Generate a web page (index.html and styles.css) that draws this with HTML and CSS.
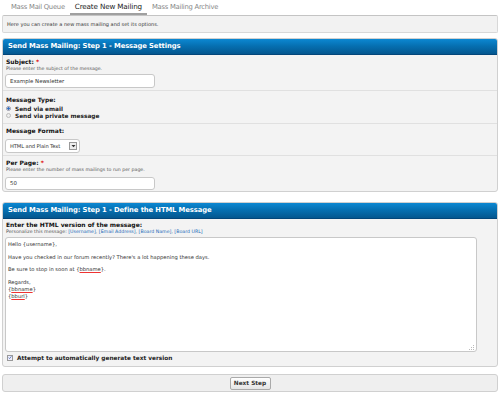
FILE: index.html
```html
<!DOCTYPE html>
<html>
<head>
<meta charset="utf-8">
<link rel="stylesheet" href="styles.css">
</head>
<body>
<div class="tabs">
  <span class="tab">Mass Mail Queue</span>
  <span class="tab active">Create New Mailing</span>
  <span class="tab">Mass Mailing Archive</span>
</div>
<div class="desc">Here you can create a new mass mailing and set its options.</div>

<div class="box">
  <div class="head">Send Mass Mailing: Step 1 - Message Settings</div>
  <div class="row r1">
    <div class="label">Subject: <span class="req">*</span></div>
    <div class="hint">Please enter the subject of the message.</div>
    <div class="input">Example Newsletter</div>
  </div>
  <div class="row r2">
    <div class="label">Message Type:</div>
    <div class="radios">
      <div class="radio"><span class="rb on"></span><b>Send via email</b></div>
      <div class="radio"><span class="rb"></span><b>Send via private message</b></div>
    </div>
  </div>
  <div class="row r3">
    <div class="label">Message Format:</div>
    <div class="select"><span>HTML and Plain Text</span><span class="arrow"><svg width="5" height="4" viewBox="0 0 5 4"><path d="M0.5 1h4L2.5 3.2z" fill="#333"/></svg></span></div>
  </div>
  <div class="row r4">
    <div class="label">Per Page: <span class="req">*</span></div>
    <div class="hint">Please enter the number of mass mailings to run per page.</div>
    <div class="input">50</div>
  </div>
</div>

<div class="box box2">
  <div class="head">Send Mass Mailing: Step 1 - Define the HTML Message</div>
  <div class="row r5">
    <div class="label">Enter the HTML version of the message:</div>
    <div class="hint">Personalize this message: <a>[Username]</a>, <a>[Email Address]</a>, <a>[Board Name]</a>, <a>[Board URL]</a></div>
    <div class="textarea">
      <p>Hello {username},</p>
      <p>Have you checked in our forum recently? There's a lot happening these days.</p>
      <p>Be sure to stop in soon at {<u>bbname</u>}.</p>
      <p>Regards,<br>{<u>bbname</u>}<br>{<u>bburl</u>}</p>
      <span class="grip"><svg width="5" height="5" viewBox="0 0 5 5"><g fill="#bbb"><rect x="4" y="0" width="1" height="1"/><rect x="2" y="2" width="1" height="1"/><rect x="4" y="2" width="1" height="1"/><rect x="0" y="4" width="1" height="1"/><rect x="2" y="4" width="1" height="1"/><rect x="4" y="4" width="1" height="1"/></g></svg></span>
    </div>
    <div class="check"><span class="cb"><svg width="5" height="5" viewBox="0 0 5 5"><path d="M0.8 2.6l1.2 1.3L4.3 0.9" stroke="#3a5fa0" stroke-width="0.9" fill="none"/></svg></span><b>Attempt to automatically generate text version</b></div>
  </div>
</div>

<div class="buttons"><span class="btn">Next Step</span></div>
</body>
</html>
```
FILE: styles.css
```css
*, *::before, *::after { box-sizing: border-box; }
html, body { margin: 0; padding: 0; background: #fff; }
body { width: 500px; font-family: "DejaVu Sans", Verdana, sans-serif; color: #222; font-size: 5px; }

.tabs { display: flex; height: 15px; padding-left: 6px; }
.tab { padding: 0 5px; line-height: 14px; font-size: 6.8px; color: #888; letter-spacing: -0.25px; }
.tab.active { color: #222; border-bottom: 2px solid #a0a0a0; font-size: 7.2px; letter-spacing: -0.15px; line-height: 13px; }

.desc { margin: 0 2px; height: 18px; line-height: 16px; border: 1px solid #d8d8d8; border-top-color: #c4c4c4; background: #f2f2f2; border-radius: 2px; padding-left: 4px; font-size: 5px; color: #333; }

.box { margin: 5px 2px 0; border: 1px solid #d0d0d0; border-radius: 3px; background: #f3f3f3; overflow: hidden; }
.box2 { margin-top: 10px; }
.head { height: 16px; line-height: 15px; padding-left: 5px; color: #fff; font-weight: bold; font-size: 6.8px; background: linear-gradient(#0c88d2, #0670b2 45%, #04578f); border-bottom: 1px solid #03467a; letter-spacing: -0.1px; }

.row { padding: 3px 2px 0; border-top: 1px solid #e0e0e0; }
.head + .row { border-top: 0; }
.label { font-weight: bold; font-size: 6px; color: #111; line-height: 8px; padding-left: 1px; }
.req { color: #d00; }
.hint { font-size: 4.7px; color: #555; line-height: 6px; padding-left: 1px; }
.hint a { color: #1a6ab8; }

.r1 { height: 35px; }
.r2 { height: 33px; padding-top: 5px; }
.r3 { height: 32px; }
.r4 { height: 36px; }

.input { margin-top: 2px; width: 150px; height: 14px; line-height: 12px; border: 1px solid #c8c8c8; border-radius: 3px; background: #fff; padding-left: 4px; font-size: 5.4px; color: #333; }
.r4 .input { margin-top: 4px; height: 13px; line-height: 11px; }

.radios { margin-top: 1px; }
.radio { display: flex; align-items: center; gap: 4px; height: 7px; font-size: 5.8px; padding-left: 1px; }
.rb { width: 5px; height: 5px; border-radius: 50%; border: 1px solid #bbb; background: #eee; flex: none; }
.rb.on { background: radial-gradient(circle, #2d6fc0 45%, #dde 65%); border-color: #99a; }

.select { margin-top: 4px; display: flex; align-items: center; height: 14px; width: 75px; border: 1px solid #c8c8c8; border-radius: 3px; background: #fff; padding: 0 2px 0 4px; font-size: 5.2px; color: #333; justify-content: space-between; white-space: nowrap; letter-spacing: -0.1px; }
.arrow { display: inline-flex; align-items: center; justify-content: center; width: 8px; height: 8px; border: 1px solid #999; background: #eee; flex: none; }

.r5 { padding-top: 2px; padding-bottom: 5px; }
.textarea { margin-top: 2px; position: relative; width: 472px; height: 115px; border: 1px solid #c8c8c8; border-radius: 3px; background: #fff; padding: 3px 2px; font-size: 5.2px; color: #333; line-height: 7px; }
.textarea p { margin: 0 0 5.5px; }
.textarea u { text-decoration: underline solid #e33; text-decoration-thickness: 0.6px; text-underline-offset: 1px; }
.grip { position: absolute; right: 2px; bottom: 1px; line-height: 0; }

.check { display: flex; align-items: center; gap: 4px; margin-top: 2px; height: 7px; font-size: 5.8px; padding-left: 2px; }
.cb { width: 6px; height: 6px; border: 1px solid #999; background: #eef; display: inline-flex; align-items: center; justify-content: center; line-height: 0; flex: none; }

.buttons { margin: 7px 2px 0; height: 18px; border: 1px solid #d0d0d0; border-radius: 3px; background: #efefef; display: flex; align-items: center; justify-content: center; }
.btn { height: 13px; line-height: 11px; width: 41px; text-align: center; border: 1px solid #aaa; border-radius: 2px; background: linear-gradient(#fff, #e4e4e4); font-weight: bold; font-size: 5.8px; color: #333; }
```
